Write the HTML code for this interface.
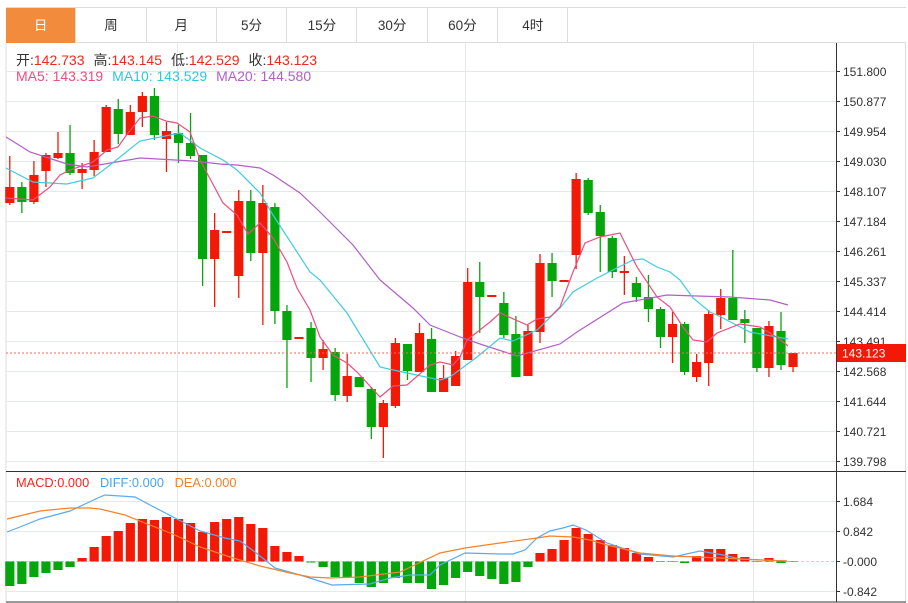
<!DOCTYPE html>
<html><head><meta charset="utf-8"><style>
*{margin:0;padding:0;box-sizing:border-box}
body{width:908px;height:603px;background:#fff;position:relative;overflow:hidden;font-family:"Liberation Sans","Noto Sans CJK SC",sans-serif}
.tabs{position:absolute;left:6px;top:7px;height:36px;width:900px;border-top:1px solid #ddd;border-bottom:1px solid #ddd}
.tab{position:absolute;top:0;height:35px;width:70.3px;border-right:1px solid #ddd;text-align:center;line-height:35px;font-size:13.5px;color:#333}
.tab.on{background:#f28b3c;color:#fff}
.lg{position:absolute;left:16px;font-size:14px;white-space:nowrap}
.lg b{font-weight:normal;margin-left:9px}
svg{position:absolute;left:0;top:0}
</style></head><body>
<div class="tabs">
<div class="tab on" style="left:0">日</div>
<div class="tab" style="left:70.3px">周</div>
<div class="tab" style="left:140.6px">月</div>
<div class="tab" style="left:210.9px">5分</div>
<div class="tab" style="left:281.2px">15分</div>
<div class="tab" style="left:351.5px">30分</div>
<div class="tab" style="left:421.8px">60分</div>
<div class="tab" style="left:492.1px">4时</div>
</div>
<svg id="s" width="908" height="603"></svg>
<div class="lg" style="top:50px;color:#333">开:<span style="color:#f2271b">142.733</span><b>高:</b><span style="color:#f2271b">143.145</span><b>低:</b><span style="color:#f2271b">142.529</span><b>收:</b><span style="color:#f2271b">143.123</span></div>
<div class="lg" style="top:68px"><span style="color:#ee4d7f">MA5: 143.319</span><b style="color:#33c5dc">MA10: 143.529</b><b style="color:#b25ec8">MA20: 144.580</b></div>
<div class="lg" style="top:475px;font-size:12.8px"><span style="color:#f2271b">MACD:0.000</span>&nbsp;&nbsp; <span style="color:#4aa3f0">DIFF:0.000</span>&nbsp;&nbsp; <span style="color:#f5822a">DEA:0.000</span></div>
<script>
var s='';
var R='#f21a06',G='#05a60b';
s+='<line x1="6" y1="43" x2="6" y2="602" stroke="#ddd"/>';
s+='<line x1="905.5" y1="43" x2="905.5" y2="602" stroke="#ddd"/>';
var py=[71.5,101.5,131.5,161.5,191.5,221.5,251.5,281.5,311.5,341.5,371.5,401.5,431.5,461.5];
var pl=['151.800','150.877','149.954','149.030','148.107','147.184','146.261','145.337','144.414','143.491','142.568','141.644','140.721','139.798'];
py.forEach(function(y,i){s+='<line x1="6" y1="'+y+'" x2="836" y2="'+y+'" stroke="#e3e9ef"/><line x1="836" y1="'+y+'" x2="840" y2="'+y+'" stroke="#333"/><text x="843" y="'+(y+4.5)+'" font-size="12" fill="#333" font-family="Liberation Sans">'+pl[i]+'</text>';});
[[501.5,'1.684'],[531.5,'0.842'],[561.5,'-0.000'],[591.5,'-0.842']].forEach(function(a){if(a[1]!='-0.000')s+='<line x1="6" y1="'+a[0]+'" x2="836" y2="'+a[0]+'" stroke="#e3e9ef"/>';s+='<line x1="836" y1="'+a[0]+'" x2="840" y2="'+a[0]+'" stroke="#333"/><text x="843" y="'+(a[0]+4.5)+'" font-size="12" fill="#333" font-family="Liberation Sans">'+a[1]+'</text>';});
[177.5,465.5,753.5].forEach(function(x){s+='<line x1="'+x+'" y1="43" x2="'+x+'" y2="602" stroke="#e3e9ef"/>';});
s+='<line x1="836.5" y1="43" x2="836.5" y2="602" stroke="#333"/>';
s+='<line x1="6" y1="471.5" x2="906" y2="471.5" stroke="#333"/>';
s+='<line x1="6" y1="602" x2="906" y2="602" stroke="#333"/>';
s+='<line x1="6" y1="561.5" x2="836" y2="561.5" stroke="#b6dcef" stroke-dasharray="3,2"/>';
var C=[[R,187,203,156,205],[G,187,202,182,213],[R,175,202,161,204],[R,155,171,153,187],[R,153,158,132,159],[G,153,173,125,175],[R,169,173,163,189],[R,152,170,140,176],[R,107,152,105,152],[G,109,134,99,144],[R,112,135,105,135],[R,96,112,92,127],[G,96,135,88,140],[R,131,139,122,172],[G,133,143,125,163],[G,143,156,113,159],[G,155,259,155,286],[R,230,259,213,307],[R,231,233,231,233],[R,201,276,190,298],[G,201,253,190,261],[R,203,253,185,325],[G,207,311,203,324],[G,311,340,305,388],[R,337,339,337,339],[G,328,358,322,382],[R,349,358,340,370],[G,352,395,348,401],[R,376,396,354,402],[G,377,387,377,387],[G,389,427,387,439],[R,403,427,400,458],[R,343,406,338,408],[G,344,371,344,380],[R,333,372,323,372],[G,339,392,328,392],[R,378,392,365,392],[R,356,386,351,386],[R,282,360,268,360],[G,282,297,262,333],[R,295,297,295,297],[G,303,335,292,338],[G,334,377,316,377],[R,331,376,325,376],[R,263,332,254,343],[G,263,281,253,297],[R,280,282,280,282],[R,179,255,173,269],[G,180,213,178,215],[G,212,236,205,272],[G,238,272,236,278],[R,271,273,256,295],[G,283,297,277,302],[G,297,309,275,322],[G,309,337,307,348],[R,324,337,312,363],[G,324,372,322,375],[R,362,377,354,382],[R,314,363,310,386],[R,298,315,289,329],[G,298,320,250,320],[G,319,323,310,343],[G,328,368,328,372],[R,326,368,321,377],[G,331,365,312,370],[R,353,367,353,372]];
C.forEach(function(c,i){var x=9.8+i*12.05;s+='<line x1="'+x+'" y1="'+c[3]+'" x2="'+x+'" y2="'+c[4]+'" stroke="'+c[0]+'" stroke-width="1.3"/>';var h=Math.max(c[2]-c[1],1.5);s+='<rect x="'+(x-4.6)+'" y="'+c[1]+'" width="9.2" height="'+h+'" fill="'+c[0]+'"/>';});
function pl_(pts,col,w){return '<polyline points="'+pts+'" fill="none" stroke="'+col+'" stroke-width="'+(w||1.2)+'"/>';}
s+=pl_('6,137 30,152 67,164 87,167 140,158 193,161 220,164 237,165 260,168 273,175 300,193 320,212 353,245 380,280 413,308 430,325 460,337 483,345 517,356 560,344 577,332 623,303 667,295 697,296 730,297 770,300 788,305','#b25ec8');
s+=pl_('6,168 33,182 67,184 93,178 110,165 140,141 180,133 200,148 223,160 237,170 260,193 273,215 310,272 320,280 347,313 380,367 407,373 440,380 450,377 477,357 500,338 513,341 537,330 560,308 573,292 597,278 633,260 643,259 657,267 670,272 680,280 693,298 710,312 717,315 750,332 788,339','#3fcbe0');
s+=pl_('6,198 33,200 50,187 60,175 70,170 93,162 107,150 118,147 125,137 140,118 153,116 166,121 177,123 190,132 200,160 223,203 237,215 248,234 260,223 273,238 287,262 297,288 310,310 320,337 333,355 347,363 357,372 380,397 393,386 407,385 430,365 440,362 453,365 460,357 467,340 490,322 500,313 527,325 537,319 550,317 560,307 573,272 585,243 600,237 620,233 637,267 657,297 670,307 683,327 693,340 707,342 717,333 740,324 760,327 778,338 788,346','#ee4d7f');
s+='<line x1="6" y1="353" x2="836" y2="353" stroke="#f26b60" stroke-dasharray="2,2"/>';
s+='<rect x="837" y="344" width="69" height="18" fill="#f21a06"/><text x="842" y="357.5" font-size="12" fill="#fff" font-family="Liberation Sans">143.123</text>';
var M=[586,584,577,573,570,567,558,547,536,531,523,519,520,517,519,523,532,522,519,517,524,528,546,552,556,562.5,567,577,577,583,587,583,578,583,583,589,585,578,572,576,579,584,582,567,553,549,540,528,534,540,545,548,553,557,561,561,563,556,549,549,554,557,561,558,563,561];
M.forEach(function(y,i){var x=9.8+i*12.05;var up=y<561.5;var t=up?y:561.5,h=Math.abs(y-561.5);if(h<0.5)return;s+='<rect x="'+(x-4.6)+'" y="'+t+'" width="9.2" height="'+h+'" fill="'+(up?R:G)+'"/>';});
s+=pl_('7,532 20,527 40,519 70,511 100,497 105,495 135,497 150,505 175,518 200,531 225,538 240,541 255,552 275,568 300,575 332,585 370,584 390,578 410,575 430,575 440,565 465,553 500,554 513,554 525,550 537,538 550,531 563,528 573,525 586,530 607,543 640,554 673,557 700,551 723,555 740,559 787,561','#5aaaf2');
s+=pl_('7,519 40,511 70,508 90,508 100,509 125,515 150,525 175,535 200,547 230,557 260,566 290,573 310,577 330,578 360,577 400,572 440,553 465,548 500,543 537,538 550,536 573,537 590,540 607,545 640,553 673,556 720,558 760,560 787,561','#f5822a');
document.getElementById('s').innerHTML=s;
</script>
</body></html>
